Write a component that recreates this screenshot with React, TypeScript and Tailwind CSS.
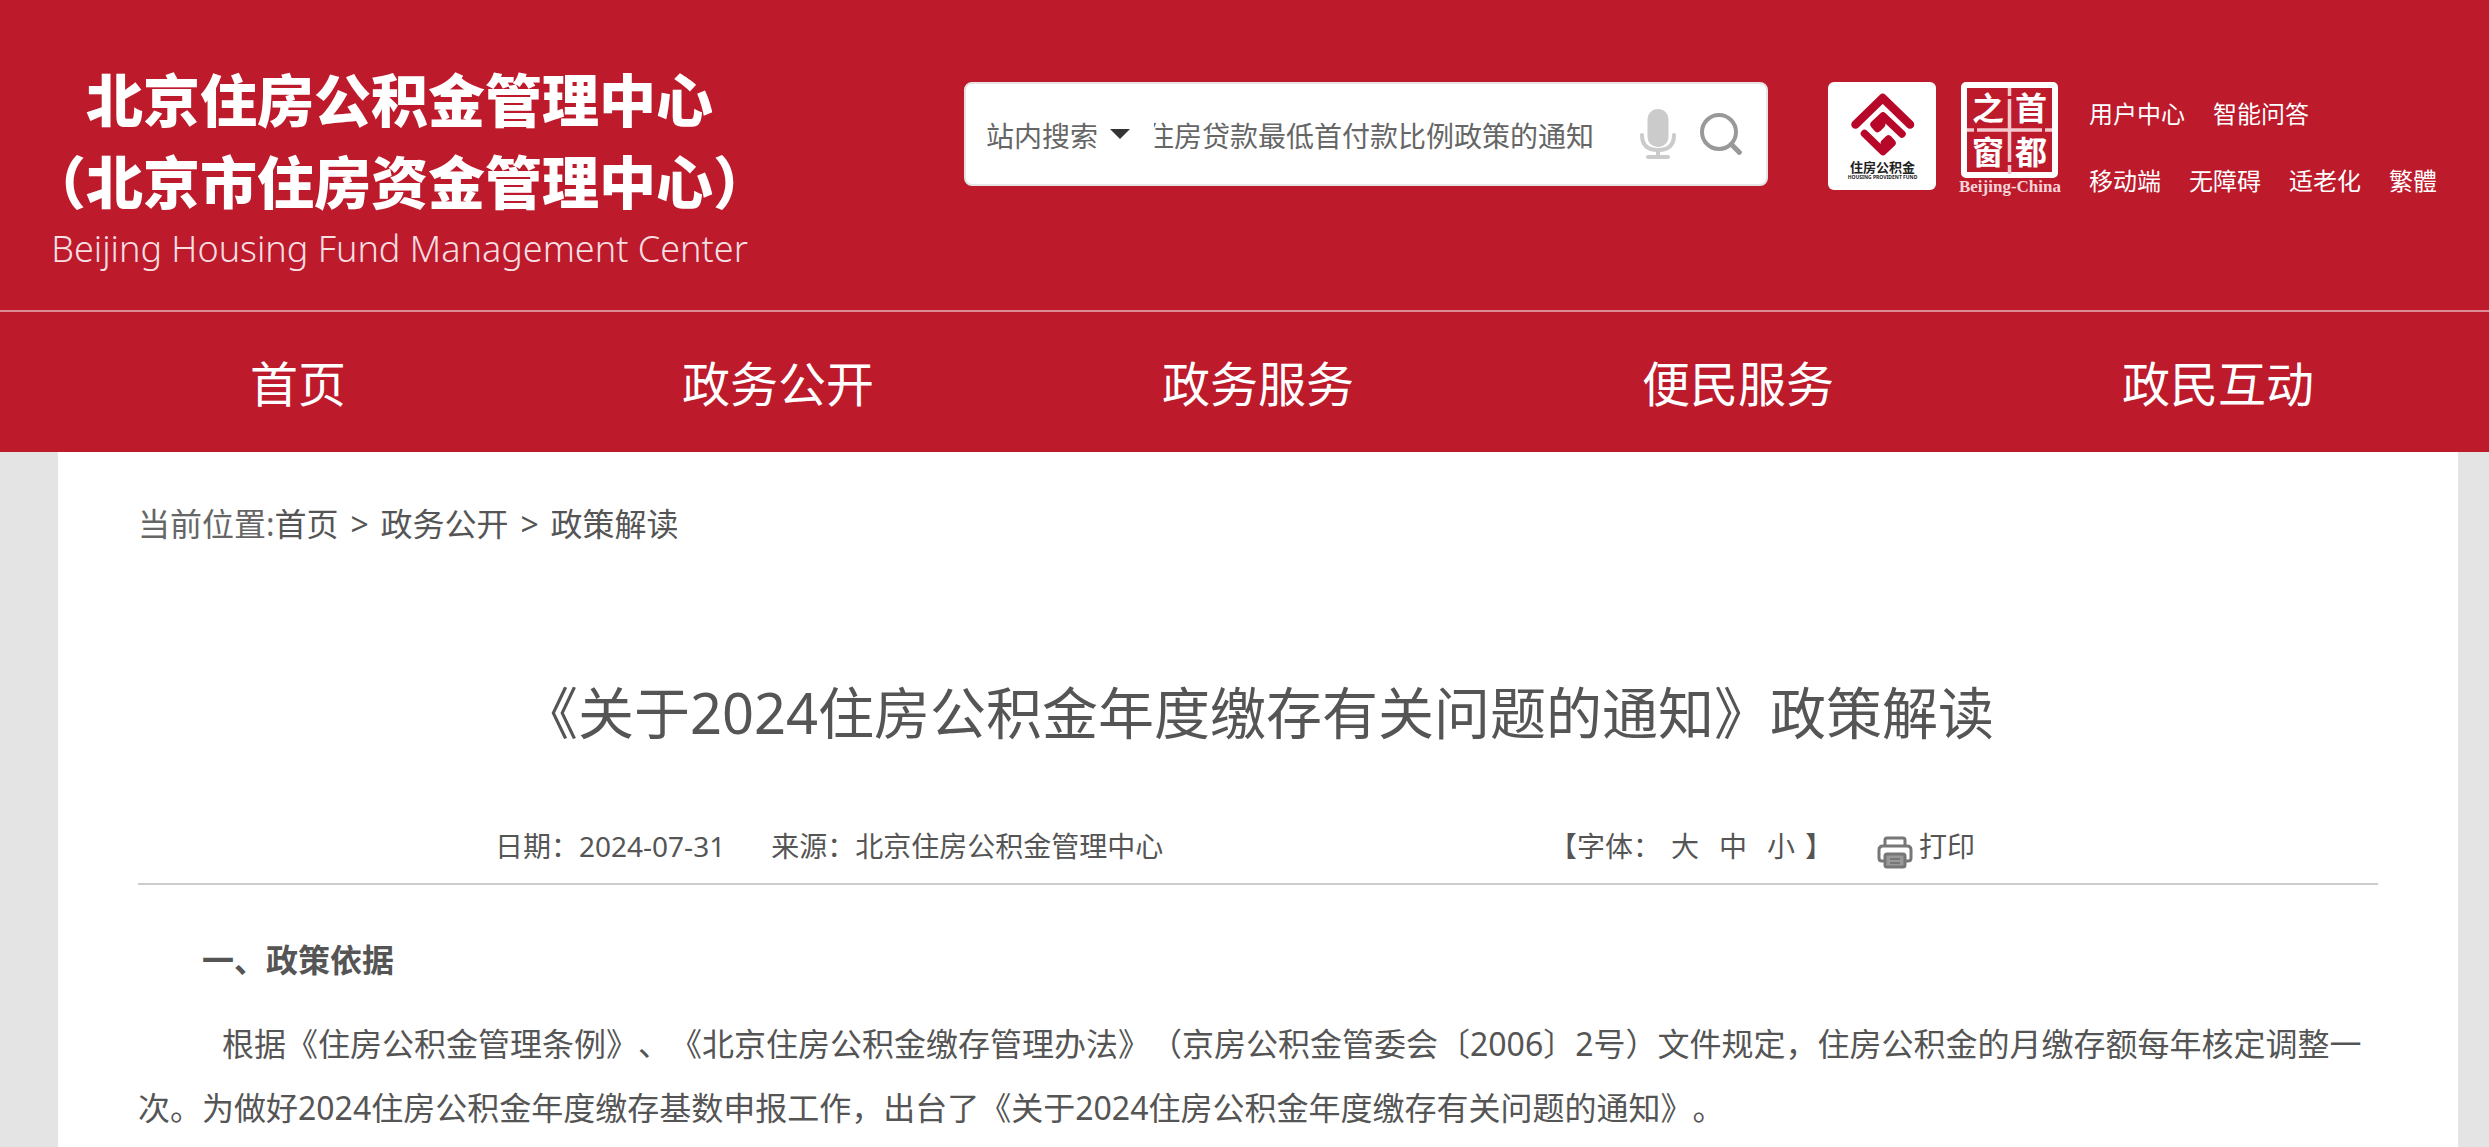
import React, { useState } from 'react';

const NAV_ITEMS = ['首页', '政务公开', '政务服务', '便民服务', '政民互动'];

const TOP_LINKS = [
    ['用户中心', '智能问答'],
    ['移动端', '无障碍', '适老化', '繁體'],
];

const FundLogo: React.FC = () => (
    <svg viewBox="0 0 108 108" className="size-[108px] rounded-md bg-white" role="img" aria-label="住房公积金">
        <g fill="none" stroke="#b8082a" strokeLinecap="round" strokeLinejoin="round">
            <path d="M27.5 42.5 54.7 16 82 42.5" strokeWidth="8.5" />
            <path d="M74 52 55 34 46 42.5 49.5 46.5 53.5 42.5" strokeWidth="7.5" />
            <path d="M36.5 51.5 55 69.5 64 61 60.5 57 56.5 61" strokeWidth="7.5" />
        </g>
        <text x="54.5" y="90" textAnchor="middle" fontSize="13" fontWeight="700" fill="#222">住房公积金</text>
        <text x="54.5" y="97" textAnchor="middle" fontSize="5" fontWeight="700" fill="#222">HOUSING PROVIDENT FUND</text>
    </svg>
);

const CapitalLogo: React.FC = () => (
    <svg viewBox="0 0 108 116" className="h-[116px] w-[108px]" role="img" aria-label="首都之窗">
        <rect x="8" y="3" width="91" height="90" fill="none" stroke="#fff" strokeWidth="6" rx="2" />
        <path d="M53.5 6V14M53.5 17V80M53.5 83V92M11 48H18M21 48H86M89 48H96" stroke="#f3c9cd" strokeWidth="3.5" />
        <g fill="#fff" fontSize="32" fontWeight="700" textAnchor="middle">
            <text x="32" y="38">之</text>
            <text x="75" y="38">首</text>
            <text x="32" y="82">窗</text>
            <text x="75" y="82">都</text>
        </g>
        <text x="54" y="110" textAnchor="middle" fontSize="17" fontWeight="700" fill="#f6d5d8" className="font-['Liberation_Serif',serif]">Beijing-China</text>
    </svg>
);

const MicIcon: React.FC = () => (
    <svg viewBox="0 0 36 50" className="h-[50px] w-9" fill="none" stroke="#cbcbcb" aria-hidden="true">
        <rect x="7.5" y="0" width="21" height="38" rx="10" fill="#cbcbcb" stroke="none" />
        <path d="M2 26Q2 41 18 41T34 26" strokeWidth="4" strokeLinecap="round" />
        <path d="M18 41V48" strokeWidth="4" />
        <path d="M8 48H28" strokeWidth="4" strokeLinecap="round" />
    </svg>
);

const PrinterIcon: React.FC = () => (
    <svg viewBox="0 0 36 34" className="mb-1 h-[34px] w-9" fill="none" stroke="#777" strokeWidth="3" aria-hidden="true">
        <path d="M8 10V4Q8 2 10 2H26Q28 2 28 4V10" />
        <path d="M8 25H5Q2 25 2 22V14Q2 10 6 10H30Q34 10 34 14V22Q34 25 31 25H28" />
        <path d="M10 18H26Q28 18 28 20V29Q28 31 26 31H10Q8 31 8 29V20Q8 18 10 18Z" fill="#999" />
        <path d="M13 23H23M13 27H23" strokeWidth="2" />
    </svg>
);

const SearchBox: React.FC = () => {
    const [keyword, setKeyword] = useState('住房贷款最低首付款比例政策的通知');

    return (
        <form
            className="flex h-[104px] min-w-0 flex-1 items-center rounded-lg border-2 border-[#e5e5e5] bg-white pl-5 pr-6 text-[28px] text-[#666]"
            onSubmit={(e) => e.preventDefault()}
        >
            <select aria-label="搜索范围" className="w-[112px] flex-none appearance-none bg-transparent pt-1 leading-10">
                <option>站内搜索</option>
            </select>
            <svg viewBox="0 0 20 10" className="ml-3 h-2.5 w-5 flex-none" aria-hidden="true">
                <path d="M0 0H20L10 10Z" fill="#333" />
            </svg>
            {/* keep the tail of a long keyword in view */}
            <input
                type="text"
                aria-label="搜索关键词"
                value={keyword}
                onChange={(e) => setKeyword(e.target.value)}
                className="ml-6 mr-[46px] min-w-0 flex-1 bg-transparent pt-1 leading-10 outline-none [direction:rtl]"
            />
            <button type="button" aria-label="语音搜索" className="flex-none">
                <MicIcon />
            </button>
            <button type="submit" aria-label="搜索" className="ml-6 flex-none">
                <svg viewBox="0 0 42 42" className="size-[42px]" fill="none" stroke="#999" strokeWidth="4" aria-hidden="true">
                    <circle cx="19" cy="19" r="17" />
                    <path d="M31 31 41 41" strokeWidth="5" />
                </svg>
            </button>
        </form>
    );
};

const Header: React.FC = () => (
    <header className="bg-[#bd1a2c] text-white">
        <div className="flex h-[312px] items-start border-b-2 border-[#de8c95] pl-[29px] pr-[52px]">
            <div className="w-[741px] flex-none whitespace-nowrap pt-[59px] text-center">
                <div className="text-[57px] font-black leading-[82px]">北京住房公积金管理中心</div>
                <div className="text-[57px] font-black leading-[82px]">（北京市住房资金管理中心）</div>
                <div className="text-[36px] font-light leading-[52px] text-[#f8dfe2]">Beijing Housing Fund Management Center</div>
            </div>
            <div className="ml-[194px] flex min-w-0 flex-1 items-start pt-[82px]">
                <SearchBox />
                <a href="#" className="ml-[60px] flex-none"><FundLogo /></a>
                <a href="#" className="ml-5 flex-none"><CapitalLogo /></a>
                <div className="ml-[25px] flex-none text-2xl">
                    {TOP_LINKS.map((row) => (
                        <div key={row[0]} className="flex gap-7 pb-[3px] leading-[64px]">
                            {row.map((label) => (
                                <a key={label} href="#">{label}</a>
                            ))}
                        </div>
                    ))}
                </div>
            </div>
        </div>
        <nav className="ml-[58px] mr-[31px] grid h-[140px] grid-cols-5 items-center pt-1 text-center text-5xl">
            {NAV_ITEMS.map((item) => (
                <a key={item} href="#">{item}</a>
            ))}
        </nav>
    </header>
);

const App: React.FC = () => {
    return (
        <div className="min-h-screen bg-[#e4e4e4] font-['Noto_Sans','Noto_Sans_CJK_SC',sans-serif] text-[#555] [text-spacing-trim:space-all]" lang="zh-CN">
            <Header />
            <main className="ml-[58px] mr-[31px] min-h-[695px] bg-white px-20 pt-10">
                <div className="flex text-[32px] leading-[64px]">
                    <span className="text-[#666]">当前位置:</span>
                    <a href="#">首页</a>
                    <span className="w-[42px] text-center">&gt;</span>
                    <a href="#">政务公开</a>
                    <span className="w-[42px] text-center">&gt;</span>
                    <a href="#">政策解读</a>
                </div>

                <h1 className="mt-[114px] text-center text-[56px] leading-[84px]">《关于2024住房公积金年度缴存有关问题的通知》政策解读</h1>

                <div className="mt-16 flex items-center justify-between border-b-2 border-[#ccc] pb-[9px] pl-[357px] pr-[403px] text-[28px] leading-[56px]">
                    <div className="flex gap-[46px]">
                        <span>日期：2024-07-31</span>
                        <span>来源：北京住房公积金管理中心</span>
                    </div>
                    <div className="flex items-center">
                        <span>【字体：</span>
                        <div className="flex gap-5 px-2.5">
                            <button type="button">大</button>
                            <button type="button">中</button>
                            <button type="button">小</button>
                        </div>
                        <span>】</span>
                        <button type="button" className="ml-11 flex items-end gap-1.5">
                            <PrinterIcon />
                            打印
                        </button>
                    </div>
                </div>

                <article className="pt-[43px] text-[32px] leading-[64px]">
                    <h2 className="indent-16 font-bold">一、政策依据</h2>
                    <p className="mt-5 indent-[84px]">
                        根据《住房公积金管理条例》、《北京住房公积金缴存管理办法》（京房公积金管委会〔2006〕2号）文件规定，住房公积金的月缴存额每年核定调整一次。为做好2024住房公积金年度缴存基数申报工作，出台了《关于2024住房公积金年度缴存有关问题的通知》。
                    </p>
                </article>
            </main>
        </div>
    );
};

export default App;
